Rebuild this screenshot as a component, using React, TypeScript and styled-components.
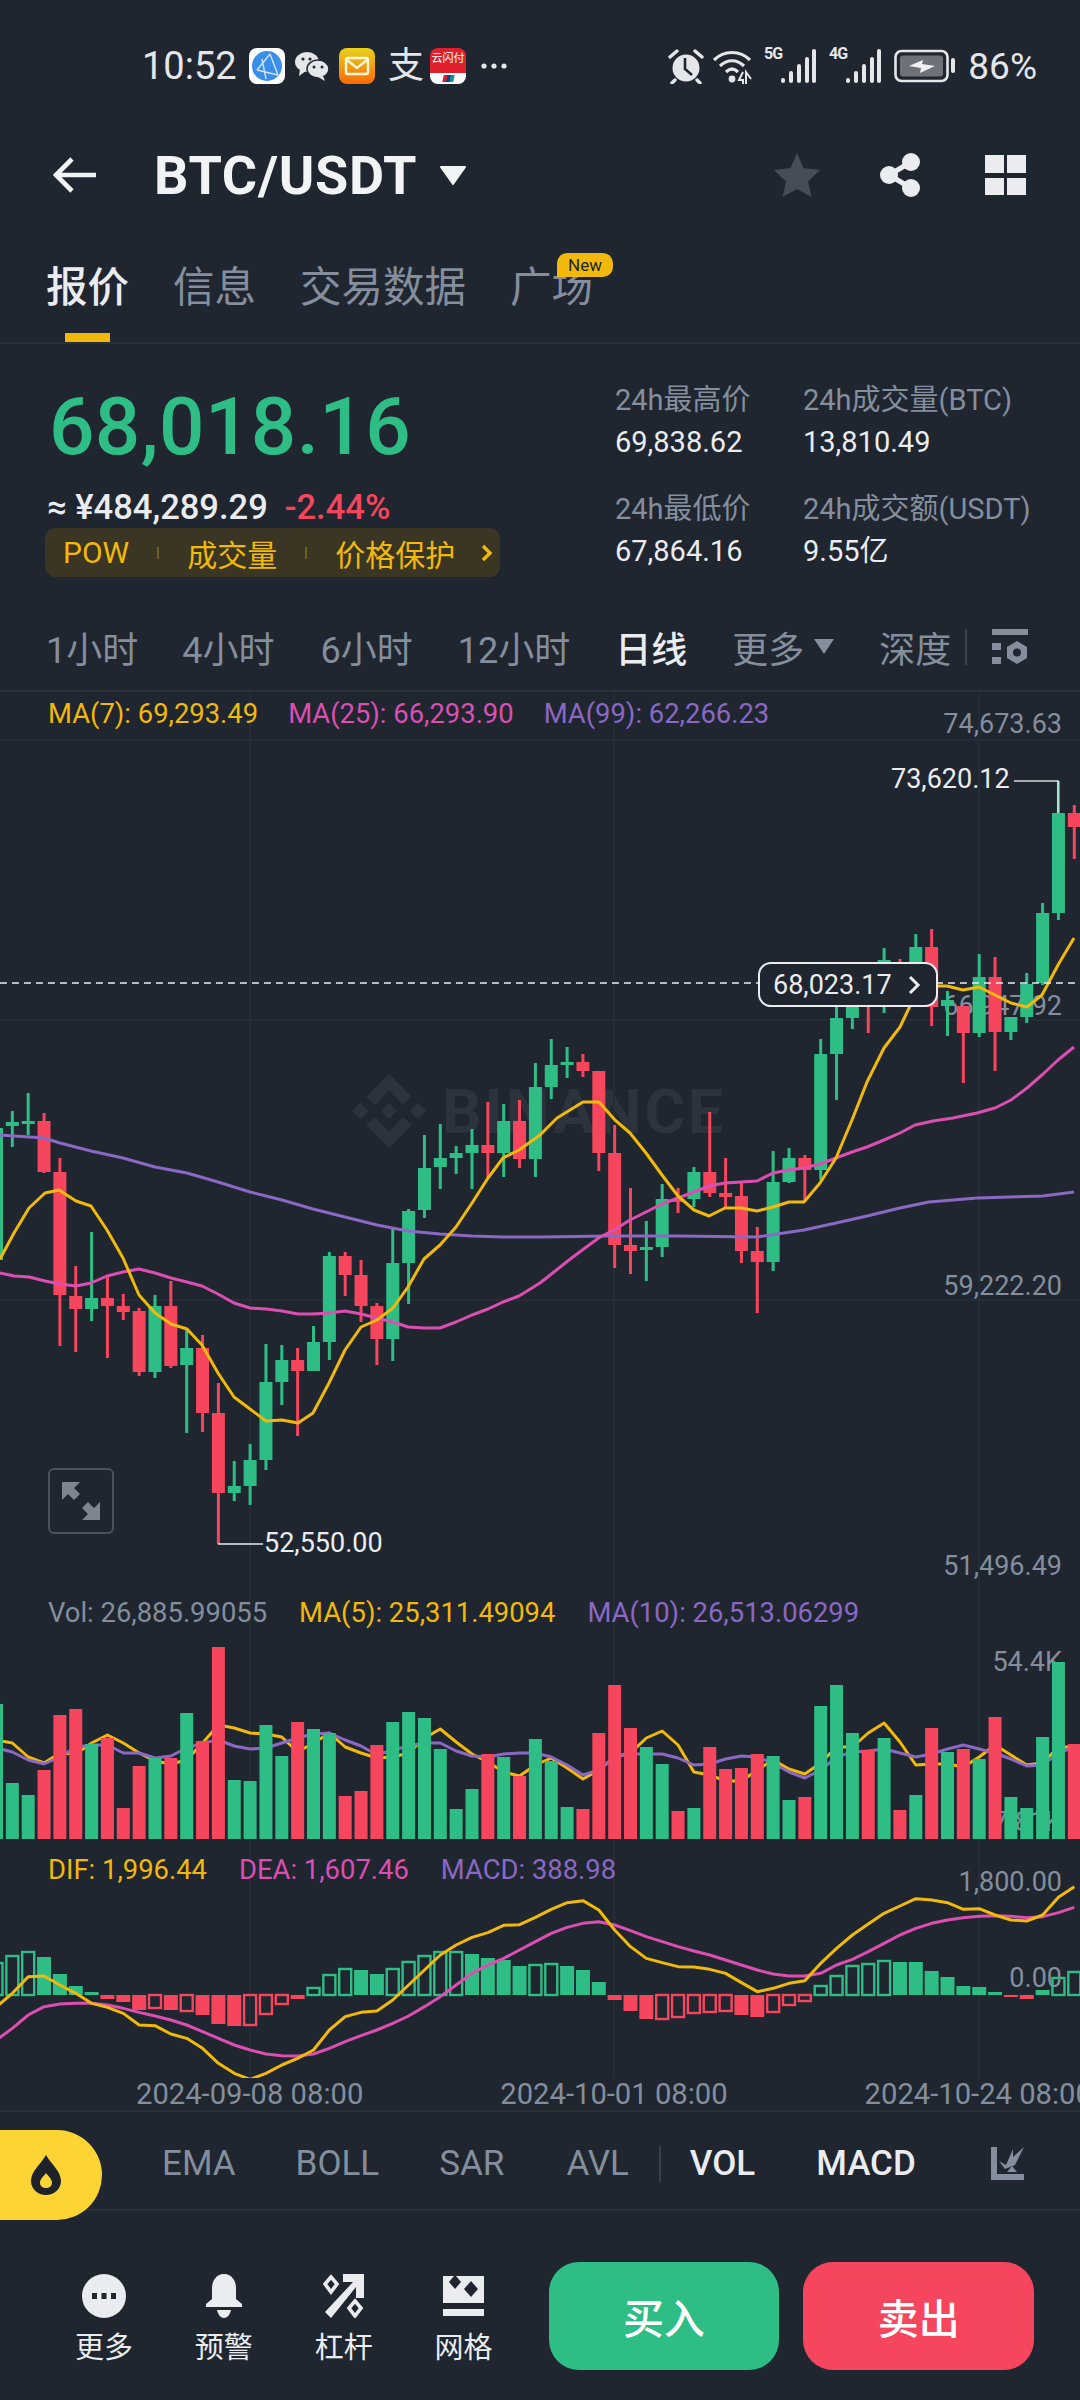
import * as React from "react";
import styled, { createGlobalStyle } from "styled-components";
import { SiBinance } from "react-icons/si";

const BG = "#1f2630";
const GREEN = "#2ebd85";
const RED = "#f6465d";
const GRAY = "#848e9c";
const WHITE = "#eaecef";
const YELLOW = "#f0b90b";
const PINK = "#dc4fb0";
const PURPLE = "#8a68c4";
const GRID = "#252c36";

const GlobalStyle = createGlobalStyle`
  html, body {
    margin: 0;
    padding: 0;
    background: ${BG};
  }
  * { box-sizing: border-box; }
`;

const Page = styled.div`
  width: 1080px;
  height: 2400px;
  overflow: hidden;
  background: ${BG};
  color: ${WHITE};
  font-family: Roboto, "Noto Sans CJK SC", sans-serif;
`;

/* status bar */
const StatusBar = styled.div`
  height: 132px;
  display: flex;
  align-items: center;
  padding: 0 43px 0 142px;
  color: #e4e6ea;
`;
const Clock = styled.span`
  font-size: 38px;
  width: 107px;
`;
const NoticeIcons = styled.div`
  display: flex;
  align-items: center;
  gap: 10px;
`;
const Square = styled.div`
  width: 36px;
  height: 36px;
  border-radius: 8px;
  overflow: hidden;
  flex: none;
`;
const AlipayGlyph = styled.span`
  font-size: 36px;
  width: 36px;
  line-height: 36px;
  margin: 0 -4px 0 3px;
  color: #e4e6ea;
`;
const UnionTop = styled.div`
  height: 25px;
  background: #e0202c;
  color: #fff;
  font-size: 11px;
  line-height: 14px;
  text-align: center;
  padding-top: 4px;
`;
const UnionBottom = styled.div`
  height: 11px;
  background: #fff;
  display: flex;
  justify-content: center;
  align-items: center;
`;
const UnionMark = styled.div`
  width: 11px;
  height: 7px;
  background: linear-gradient(90deg, #d8212c 33%, #14418b 33%, #14418b 66%, #1a8f8f 66%);
  transform: skewX(-12deg);
`;
const MoreDots = styled.svg`
  margin-left: 5px;
`;
const StatusRight = styled.div`
  margin-left: auto;
  display: flex;
  align-items: center;
  gap: 9px;
`;
const NetworkTag = styled.div`
  position: relative;
  width: 52px;
  height: 36px;
  margin-right: 4px;
`;
const NetworkText = styled.span`
  position: absolute;
  left: 0;
  top: -4px;
  font-size: 16px;
  font-weight: 700;
  letter-spacing: -1px;
`;
const BatteryText = styled.span`
  font-size: 37px;
  width: 72px;
  text-align: right;
`;

/* nav */
const NavBar = styled.div`
  height: 86px;
  display: flex;
  align-items: center;
  padding: 0 54px 0 53px;
`;
const Title = styled.span`
  font-size: 54px;
  font-weight: 700;
  letter-spacing: 0.7px;
  margin-left: 57px;
  color: #f2f3f5;
`;
const TitleCaret = styled.svg`
  margin-left: 22px;
`;
const NavActions = styled.div`
  margin-left: auto;
  display: flex;
  align-items: center;
  gap: 60px;
`;

/* tabs */
const TabsRow = styled.div`
  height: 126px;
  display: flex;
  gap: 44px;
  padding-left: 46px;
  border-bottom: 2px solid #2b3139;
`;
const Tab = styled.div<{ $active?: boolean }>`
  position: relative;
  padding-top: 45px;
  font-size: 41.5px;
  line-height: 50px;
  font-weight: ${(p) => (p.$active ? 500 : 400)};
  color: ${(p) => (p.$active ? WHITE : GRAY)};
  &::after {
    content: "";
    display: ${(p) => (p.$active ? "block" : "none")};
    position: absolute;
    left: 19px;
    bottom: 0;
    width: 45px;
    height: 9px;
    background: ${YELLOW};
  }
`;
const NewBadge = styled.span`
  position: absolute;
  left: 47px;
  top: 35px;
  width: 56px;
  height: 24px;
  border-radius: 10px 10px 10px 0;
  background: ${YELLOW};
  color: #1e2329;
  font-size: 17px;
  line-height: 24px;
  text-align: center;
`;

/* ticker */
const Ticker = styled.div`
  height: 263px;
  display: flex;
  padding-top: 38px;
`;
const TickerLeft = styled.div`
  width: 615px;
  padding: 5px 0 0 47px;
`;
const Price = styled.div`
  font-size: 80px;
  line-height: 80px;
  font-weight: 500;
  letter-spacing: 0.4px;
  color: ${GREEN};
  margin-left: 2px;
`;
const FiatRow = styled.div`
  display: flex;
  gap: 17px;
  margin-top: 20px;
  font-size: 34.5px;
  line-height: 40px;
  font-weight: 500;
`;
const Change = styled.span`
  color: ${RED};
`;
const TagStrip = styled.div`
  width: 455px;
  height: 49px;
  margin-top: 1px;
  margin-left: -2px;
  padding-left: 18px;
  display: flex;
  align-items: center;
  border-radius: 10px;
  background: #3b3623;
  color: ${YELLOW};
  font-size: 30px;
  white-space: nowrap;
`;
const TagSep = styled.i`
  flex: none;
  width: 2px;
  height: 12px;
  background: #6d5f22;
  margin: 0 28px;
`;
const TagChevron = styled.svg`
  flex: none;
  margin-left: 26px;
`;
const StatsGrid = styled.div`
  display: grid;
  grid-template-columns: 188px auto;
  grid-auto-rows: 36px;
  row-gap: 6px;
  align-content: start;
`;
const StatLabel = styled.div<{ $spaced?: boolean }>`
  font-size: 29px;
  line-height: 36px;
  color: ${GRAY};
  margin-top: ${(p) => (p.$spaced ? "25px" : "0")};
  white-space: nowrap;
`;
const StatValue = styled.div<{ $spaced?: boolean }>`
  font-size: 29px;
  line-height: 36px;
  margin-top: ${(p) => (p.$spaced ? "25px" : "0")};
  color: ${WHITE};
`;

/* timeframes */
const TimeRow = styled.div`
  height: 85px;
  display: flex;
  align-items: center;
  padding: 0 0 4px 46px;
  border-bottom: 2px solid #2b3139;
`;
const TimeItem = styled.span<{ $gap: number; $active?: boolean }>`
  font-size: 36px;
  margin-right: ${(p) => p.$gap}px;
  color: ${(p) => (p.$active ? WHITE : GRAY)};
  font-weight: ${(p) => (p.$active ? 500 : 400)};
  white-space: nowrap;
`;
const TimeCaret = styled.svg`
  margin-right: 45px;
`;
const TimeSep = styled.i`
  width: 2px;
  height: 36px;
  background: #39404b;
  margin: 0 25px 0 14px;
`;

/* charts */
const Panel = styled.div<{ $h: number }>`
  position: relative;
  width: 1080px;
  height: ${(p) => p.$h}px;
  overflow: hidden;
`;
const ChartSvg = styled.svg`
  position: absolute;
  left: 0;
  top: 0;
  display: block;
`;
const Legend = styled.div<{ $pad: number; $gap: number }>`
  position: relative;
  display: flex;
  gap: ${(p) => p.$gap}px;
  padding: ${(p) => p.$pad}px 0 0 48px;
  font-size: 27.4px;
  line-height: 36px;
  white-space: nowrap;
`;
const LegendItem = styled.span<{ $c: string }>`
  color: ${(p) => p.$c};
`;
const AxisLabel = styled.span<{ $top: number }>`
  position: absolute;
  right: 18px;
  top: ${(p) => p.$top}px;
  font-size: 27px;
  line-height: 34px;
  color: ${GRAY};
`;
const Watermark = styled.div`
  position: absolute;
  left: 352px;
  top: 382px;
  display: flex;
  align-items: center;
  gap: 16px;
  color: #2c333d;
  font-size: 62px;
  font-weight: 700;
  letter-spacing: 3px;
`;
const PriceNote = styled.span<{ $left: number; $top: number }>`
  position: absolute;
  left: ${(p) => p.$left}px;
  top: ${(p) => p.$top}px;
  font-size: 27px;
  line-height: 34px;
  color: ${WHITE};
`;
const LastPriceTag = styled.div`
  position: absolute;
  left: 758px;
  top: 270px;
  width: 180px;
  height: 45px;
  border: 2px solid ${WHITE};
  border-radius: 13px;
  background: ${BG};
  display: flex;
  align-items: center;
  justify-content: space-between;
  padding: 0 15px 0 13px;
  font-size: 27px;
`;
const ExpandButton = styled.div`
  position: absolute;
  left: 48px;
  top: 776px;
  width: 66px;
  height: 66px;
  border: 2px solid #4a525e;
  border-radius: 6px;
  display: flex;
  align-items: center;
  justify-content: center;
`;
const DateRow = styled.div`
  height: 32px;
  display: flex;
  gap: 137px;
  padding-left: 136px;
  font-size: 29.2px;
  line-height: 32px;
  color: ${GRAY};
  white-space: nowrap;
`;

/* indicators */
const IndicatorBar = styled.div`
  position: relative;
  height: 101px;
  display: flex;
  align-items: center;
  padding: 6px 56px 0 162px;
  font-size: 35px;
  color: ${GRAY};
  border-top: 2px solid #2b3139;
  border-bottom: 2px solid #2b3139;
`;
const HotPill = styled.div`
  position: absolute;
  left: 0;
  top: 18px;
  width: 102px;
  height: 90px;
  background: #fcd535;
  border-radius: 0 45px 45px 0;
  display: flex;
  align-items: center;
  justify-content: center;
  padding-right: 10px;
`;
const IndicatorItem = styled.span<{ $gap: number; $active?: boolean }>`
  margin-right: ${(p) => p.$gap}px;
  color: ${(p) => (p.$active ? WHITE : GRAY)};
  font-weight: ${(p) => (p.$active ? 500 : 400)};
`;
const IndicatorSep = styled.i`
  width: 2px;
  height: 36px;
  background: #39404b;
  margin-right: 29px;
`;
const ChartIcon = styled.svg`
  margin-left: auto;
`;

/* bottom actions */
const BottomBar = styled.div`
  display: flex;
  padding: 51px 46px 0 44px;
`;
const ActionItem = styled.div`
  width: 120px;
  padding-top: 12px;
  display: flex;
  flex-direction: column;
  align-items: center;
  font-size: 29px;
  line-height: 40px;
  color: ${WHITE};
`;
const ActionIcon = styled.div`
  height: 44px;
  margin-bottom: 10px;
`;
const TradeButton = styled.button<{ $sell?: boolean }>`
  width: 231px;
  height: 108px;
  margin-left: ${(p) => (p.$sell ? "24px" : "25px")};
  border: none;
  border-radius: 30px;
  background: ${(p) => (p.$sell ? RED : GREEN)};
  color: #fff;
  font-family: inherit;
  font-size: 41px;
  font-weight: 500;
`;

const kx = (k: number) => -3.5 + 15.85 * k;
const toPts = (ys: number[]) => ys.map((y, k) => `${kx(k)},${y}`).join(" ");
const xyPts = (pts: number[][]) => pts.map((p) => p.join(",")).join(" ");

// wick top, body top, body bottom, wick bottom, 1 = green
const candles: number[][] = [
  [1120, 1128, 1260, 1262, 1], [1111, 1122, 1126, 1147, 1], [1093, 1121, 1123, 1135, 1], [1113, 1121, 1172, 1173, 0],
  [1158, 1172, 1295, 1346, 0], [1266, 1296, 1309, 1352, 0], [1232, 1298, 1309, 1321, 1], [1277, 1298, 1306, 1358, 0],
  [1294, 1306, 1312, 1320, 0], [1308, 1311, 1372, 1376, 0], [1295, 1306, 1372, 1378, 1], [1281, 1306, 1366, 1368, 0],
  [1330, 1348, 1365, 1433, 1], [1335, 1348, 1413, 1432, 0], [1383, 1413, 1493, 1544, 0], [1461, 1486, 1493, 1501, 1],
  [1444, 1460, 1486, 1505, 1], [1344, 1382, 1460, 1470, 1], [1345, 1360, 1382, 1405, 1], [1348, 1360, 1371, 1436, 0],
  [1326, 1342, 1371, 1371, 1], [1252, 1256, 1342, 1360, 1], [1252, 1256, 1275, 1296, 0], [1260, 1275, 1306, 1322, 0],
  [1303, 1306, 1339, 1365, 0], [1228, 1263, 1339, 1361, 1], [1209, 1211, 1263, 1304, 1], [1135, 1168, 1210, 1218, 1],
  [1124, 1158, 1167, 1189, 1], [1146, 1153, 1158, 1174, 1], [1129, 1145, 1153, 1189, 1], [1102, 1145, 1153, 1177, 0],
  [1104, 1121, 1153, 1177, 1], [1100, 1121, 1159, 1168, 0], [1063, 1087, 1159, 1177, 1], [1039, 1065, 1087, 1099, 1],
  [1047, 1062, 1064, 1078, 1], [1054, 1062, 1071, 1077, 0], [1071, 1071, 1153, 1171, 0], [1125, 1153, 1245, 1268, 0],
  [1188, 1245, 1251, 1274, 0], [1221, 1247, 1250, 1281, 1], [1184, 1199, 1247, 1257, 1], [1188, 1199, 1202, 1213, 0],
  [1167, 1172, 1199, 1207, 1], [1112, 1172, 1193, 1197, 0], [1158, 1193, 1197, 1208, 0], [1183, 1196, 1251, 1263, 0],
  [1227, 1251, 1262, 1313, 0], [1151, 1182, 1262, 1271, 1], [1148, 1158, 1182, 1183, 1], [1155, 1158, 1170, 1201, 0],
  [1039, 1054, 1170, 1180, 1], [1006, 1018, 1054, 1100, 1], [990, 1000, 1018, 1029, 1], [993, 995, 1005, 1033, 0],
  [948, 960, 995, 1013, 1], [959, 965, 990, 1000, 0], [934, 947, 990, 1000, 1], [929, 947, 1007, 1026, 0],
  [991, 1000, 1006, 1036, 1], [1006, 1006, 1033, 1083, 0], [954, 977, 1033, 1037, 1], [957, 977, 1032, 1071, 0],
  [1017, 1017, 1032, 1040, 1], [973, 984, 1017, 1023, 1], [903, 913, 983, 985, 1], [781, 813, 913, 920, 1],
  [805, 813, 827, 859, 0],
];

const ma7 = [[0,1259],[14,1233],[29,1208],[45,1193],[59,1190],[76,1201],[91,1206],[107,1230],[123,1258],[139,1295],[155,1313],[171,1324],[187,1329],[202,1345],[218,1373],[234,1397],[250,1409],[266,1421],[282,1420],[298,1423],[313,1413],[329,1383],[345,1350],[361,1327],[377,1320],[393,1308],[408,1287],[424,1259],[440,1245],[456,1227],[472,1203],[488,1178],[503,1158],[519,1150],[540,1135],[557,1118],[583,1102],[599,1102],[615,1120],[630,1133],[646,1153],[662,1175],[678,1196],[694,1210],[709,1216],[725,1208],[741,1208],[757,1211],[773,1207],[789,1202],[804,1202],[820,1183],[836,1158],[852,1120],[867,1082],[884,1048],[900,1027],[910,1006],[938,986],[947,986],[963,990],[979,987],[995,995],[1011,1003],[1027,1007],[1042,995],[1058,965],[1074,938]];
const ma25 = [[0,1273],[14,1276],[29,1277],[45,1281],[60,1284],[76,1286],[91,1283],[107,1276],[123,1272],[139,1269],[155,1273],[171,1278],[187,1282],[202,1286],[218,1294],[234,1303],[250,1308],[266,1309],[282,1311],[298,1314],[313,1314],[329,1313],[345,1311],[361,1314],[377,1318],[393,1322],[408,1327],[424,1328],[440,1328],[456,1322],[472,1315],[488,1309],[503,1302],[519,1296],[540,1283],[554,1272],[569,1260],[585,1248],[600,1237],[614,1230],[630,1220],[646,1212],[662,1204],[678,1198],[694,1192],[709,1186],[725,1183],[741,1182],[757,1181],[773,1173],[789,1170],[804,1168],[820,1164],[836,1158],[852,1152],[867,1147],[884,1140],[900,1133],[915,1125],[933,1121],[953,1118],[977,1113],[995,1108],[1011,1100],[1027,1088],[1042,1075],[1058,1060],[1074,1047]];
const ma99 = [[0,1135],[44,1138],[60,1143],[91,1151],[123,1158],[155,1167],[187,1173],[218,1182],[250,1192],[282,1200],[313,1209],[345,1217],[377,1225],[408,1231],[440,1234],[472,1236],[503,1237],[540,1237],[609,1236],[678,1236],[757,1237],[804,1230],[836,1223],[867,1216],[900,1208],[929,1202],[977,1198],[1043,1196],[1074,1192]];

// bar top, 1 = green
const volumes: number[][] = [
  [1704,1],[1783,1],[1795,1],[1770,0],[1715,0],[1709,0],[1744,1],[1738,0],[1808,0],[1766,0],[1758,1],[1758,0],[1713,1],[1741,0],[1647,0],[1780,1],[1781,1],[1725,1],[1756,1],[1722,0],[1729,1],[1733,1],[1796,0],[1791,0],[1745,0],[1722,1],[1712,1],[1718,1],[1749,1],[1809,1],[1789,1],[1754,0],[1757,1],[1776,0],[1739,1],
  [1761,1],[1807,1],[1809,0],[1733,0],[1685,0],[1728,0],[1747,1],[1764,1],[1811,0],[1808,1],[1747,0],[1769,0],[1768,0],[1754,0],[1756,1],[1800,1],[1797,0],[1706,1],[1685,1],[1733,1],[1750,0],[1738,1],[1810,0],[1795,1],[1728,0],[1752,1],[1749,0],[1759,1],[1717,0],[1797,1],[1808,1],[1737,1],[1662,1],[1744,0],
];
const volMa5 = [1740,1743,1757,1763,1753,1754,1743,1735,1743,1753,1761,1764,1760,1743,1725,1728,1733,1734,1737,1752,1743,1733,1747,1753,1758,1757,1753,1738,1729,1742,1754,1762,1772,1776,1765,1758,1768,1779,1770,1757,1753,1738,1731,1745,1772,1775,1781,1781,1770,1760,1769,1774,1763,1747,1747,1733,1723,1742,1765,1764,1764,1767,1757,1745,1755,1765,1763,1747,1747];
const volMa10 = [1748,1752,1760,1764,1757,1747,1745,1745,1753,1753,1758,1756,1748,1743,1740,1746,1749,1748,1743,1738,1734,1733,1740,1746,1755,1750,1746,1743,1743,1751,1756,1757,1754,1753,1753,1757,1765,1775,1770,1757,1754,1754,1754,1758,1765,1764,1759,1756,1757,1763,1772,1778,1770,1757,1752,1751,1749,1753,1757,1754,1749,1745,1749,1753,1759,1766,1765,1753,1747];

// histogram value, 1 = hollow
const macdHist: number[][] = [
  [32,1],[39,1],[43,1],[38,0],[21,0],[9,0],[3,0],[-4,0],[-7,0],[-15,0],[-13,1],[-15,0],[-16,1],[-20,0],[-29,0],[-31,0],[-30,1],[-19,1],[-9,1],[-4,0],[7,1],[20,1],[26,1],[25,0],[21,0],[26,1],[33,1],[39,1],[43,1],[43,1],[41,0],[37,0],[35,0],[29,0],[30,1],[31,1],[29,0],[25,0],[13,0],[-5,0],[-16,0],[-24,0],[-24,1],[-22,1],[-18,1],[-17,1],[-16,1],[-20,0],[-22,0],[-17,1],[-10,1],[-6,1],[9,1],[19,1],[29,1],[31,1],[34,1],[33,0],[33,0],[24,0],[18,0],[9,0],[8,0],[3,0],[-2,0],[-4,0],[5,0],[17,1],[23,1],
];
const dif = [470,430,380,378,405,430,460,472,490,525,527,552,565,595,640,670,688,670,645,625,600,540,500,487,483,450,405,360,315,285,262,248,226,224,202,178,158,152,180,240,290,325,338,350,351,358,370,398,425,415,400,392,340,295,255,222,190,168,146,150,158,178,176,195,210,213,195,142,110].map((p) => 1850 + p / 3);
const dea = [570,535,495,470,462,460,460,465,475,487,498,510,525,545,565,585,600,612,617,618,612,595,575,557,540,520,498,470,440,405,370,345,325,300,275,250,232,220,215,225,242,260,275,290,303,315,330,345,360,372,378,378,370,345,328,305,280,255,235,220,210,203,199,197,199,203,200,188,172].map((p) => 1850 + p / 3);

const GridLines = ({ top, bottom }: { top: number; bottom: number }) => (
  <>
    {[250, 614, 979].map((x) => (
      <line key={x} x1={x} x2={x} y1={top} y2={bottom} stroke={GRID} strokeWidth="2" />
    ))}
  </>
);

const Trend = ({ points, color, w = 3 }: { points: string; color: string; w?: number }) => (
  <polyline points={points} fill="none" stroke={color} strokeWidth={w} strokeLinejoin="round" />
);

const MainChart = () => (
  <ChartSvg width="1080" height="891" viewBox="0 692 1080 891">
    <GridLines top={692} bottom={1583} />
    {[740, 1020, 1300].map((y) => (
      <line key={y} x1="0" x2="1080" y1={y} y2={y} stroke={GRID} strokeWidth="2" />
    ))}
    {candles.map(([wt, bt, bb, wb, up], k) => {
      const c = up ? GREEN : RED;
      return (
        <g key={k} fill={c}>
          <rect x={kx(k) - 1.5} y={wt} width="3" height={wb - wt} />
          <rect x={kx(k) - 6.5} y={bt} width="13" height={Math.max(bb - bt, 3)} />
        </g>
      );
    })}
    <Trend points={xyPts(ma99)} color={PURPLE} />
    <Trend points={xyPts(ma25)} color={PINK} />
    <Trend points={xyPts(ma7)} color={YELLOW} />
    <line x1="0" x2="1078" y1="983" y2="983" stroke={WHITE} strokeWidth="1.5" strokeDasharray="7 5" />
    <polyline points="1014,781 1058,781 1058,813" fill="none" stroke={WHITE} strokeWidth="1.5" opacity="0.9" />
    <line x1="218" x2="263" y1="1544" y2="1544" stroke={WHITE} strokeWidth="1.5" />
  </ChartSvg>
);

const VolumeChart = () => (
  <ChartSvg width="1080" height="267" viewBox="0 1583 1080 267">
    <GridLines top={1583} bottom={1850} />
    <Trend points={toPts(volMa5)} color={YELLOW} />
    <Trend points={toPts(volMa10)} color={PURPLE} />
    {volumes.map(([top, up], k) => (
      <rect key={k} x={kx(k) - 6.5} y={top} width="13" height={1839 - top} fill={up ? GREEN : RED} />
    ))}
  </ChartSvg>
);

const MacdChart = () => (
  <ChartSvg width="1080" height="228" viewBox="0 1850 1080 228">
    <GridLines top={1850} bottom={2078} />
    {macdHist.map(([v, hollow], k) => {
      const c = v >= 0 ? GREEN : RED;
      const y = v >= 0 ? 1995 - v : 1995;
      const h = Math.abs(v);
      return hollow ? (
        <rect key={k} x={kx(k) - 6} y={y} width="12" height={h} fill="none" stroke={c} strokeWidth="2.4" />
      ) : (
        <rect key={k} x={kx(k) - 7} y={y} width="14" height={h} fill={c} />
      );
    })}
    <Trend points={toPts(dea)} color={PINK} />
    <Trend points={toPts(dif)} color={YELLOW} />
  </ChartSvg>
);

const App = () => (
  <Page>
    <GlobalStyle />
    <StatusBar>
      <Clock>10:52</Clock>
      <NoticeIcons>
        <Square>
          <svg width="36" height="36" viewBox="0 0 36 36">
            <rect width="36" height="36" fill="#fff" />
            <circle cx="18" cy="18" r="15" fill="#3b8fe8" />
            <path d="M8 22 L21 6 M8 22 L29 27 M21 6 L29 27 M13 11 L17 31" stroke="#cfe4fb" strokeWidth="1.4" fill="none" />
          </svg>
        </Square>
        <svg width="34" height="36" viewBox="0 0 34 36">
          <ellipse cx="12" cy="14" rx="12" ry="10" fill="#e4e6ea" />
          <path d="M5 21 L4 28 L11 23 Z" fill="#e4e6ea" />
          <ellipse cx="23" cy="21" rx="11" ry="9" fill="#e4e6ea" stroke="#1f2630" strokeWidth="1.5" />
          <path d="M28 28 L30 33 L23 29 Z" fill="#e4e6ea" />
          <circle cx="8" cy="11" r="1.6" fill="#1f2630" />
          <circle cx="15" cy="11" r="1.6" fill="#1f2630" />
          <circle cx="19" cy="19" r="1.5" fill="#1f2630" />
          <circle cx="27" cy="19" r="1.5" fill="#1f2630" />
        </svg>
        <Square>
          <svg width="36" height="36" viewBox="0 0 36 36">
            <defs>
              <linearGradient id="mailGrad" x1="0" y1="0" x2="0" y2="1">
                <stop offset="0" stopColor="#e8d21c" />
                <stop offset="1" stopColor="#f86a08" />
              </linearGradient>
            </defs>
            <rect width="36" height="36" fill="url(#mailGrad)" />
            <rect x="7" y="10" width="22" height="16" rx="2" fill="none" stroke="#fff8d8" strokeWidth="2.4" />
            <path d="M8 12 L18 20 L28 12" fill="none" stroke="#fff8d8" strokeWidth="2.4" />
          </svg>
        </Square>
        <AlipayGlyph>支</AlipayGlyph>
        <Square>
          <UnionTop>云闪付</UnionTop>
          <UnionBottom>
            <UnionMark />
          </UnionBottom>
        </Square>
        <MoreDots width="26" height="36" viewBox="0 0 26 36">
          <circle cx="3" cy="18" r="2.6" fill="#e4e6ea" />
          <circle cx="13" cy="18" r="2.6" fill="#e4e6ea" />
          <circle cx="23" cy="18" r="2.6" fill="#e4e6ea" />
        </MoreDots>
      </NoticeIcons>
      <StatusRight>
        <svg width="36" height="36" viewBox="0 0 36 36">
          <circle cx="18" cy="20" r="13.5" fill="#e4e6ea" />
          <path d="M17 10 V21 L24 27" stroke="#1f2630" strokeWidth="2.6" fill="none" />
          <path d="M2 9 L9 3 M34 9 L27 3 M7 32 L4 35 M29 32 L32 35" stroke="#e4e6ea" strokeWidth="3.4" strokeLinecap="round" />
        </svg>
        <svg width="42" height="36" viewBox="0 0 42 36">
          <path d="M1 12 C11 2 27 2 37 12" stroke="#e4e6ea" strokeWidth="3.2" fill="none" />
          <path d="M7 18 C14 11 24 11 31 18" stroke="#e4e6ea" strokeWidth="3.2" fill="none" />
          <path d="M13 24 C17 20 21 20 25 24" stroke="#e4e6ea" strokeWidth="3.2" fill="none" />
          <circle cx="19" cy="31" r="3.4" fill="#e4e6ea" />
          <path d="M30 24 L26 32 H30 V36 M33 36 V24 L38 31" stroke="#e4e6ea" strokeWidth="2" fill="none" />
        </svg>
        <NetworkTag>
          <NetworkText>5G</NetworkText>
          <svg width="52" height="36" viewBox="0 0 52 36">
            <rect x="17" y="30" width="4" height="5" rx="2" fill="#e4e6ea" />
            <rect x="25" y="23" width="4" height="12" rx="2" fill="#e4e6ea" />
            <rect x="33" y="16" width="4" height="19" rx="2" fill="#e4e6ea" />
            <rect x="41" y="9" width="4" height="26" rx="2" fill="#e4e6ea" />
            <rect x="48" y="1" width="4" height="34" rx="2" fill="#e4e6ea" />
          </svg>
        </NetworkTag>
        <NetworkTag>
          <NetworkText>4G</NetworkText>
          <svg width="52" height="36" viewBox="0 0 52 36">
            <rect x="17" y="30" width="4" height="5" rx="2" fill="#e4e6ea" />
            <rect x="25" y="23" width="4" height="12" rx="2" fill="#e4e6ea" />
            <rect x="33" y="16" width="4" height="19" rx="2" fill="#e4e6ea" />
            <rect x="41" y="9" width="4" height="26" rx="2" fill="#e4e6ea" />
            <rect x="48" y="1" width="4" height="34" rx="2" fill="#e4e6ea" />
          </svg>
        </NetworkTag>
        <svg width="62" height="36" viewBox="0 0 62 36">
          <rect x="1.5" y="3" width="52" height="30" rx="6" fill="none" stroke="#e4e6ea" strokeWidth="2.6" />
          <rect x="6" y="7.5" width="43" height="21" rx="3" fill="#6e7278" />
          <path d="M15 18 L29 12 L28 16 L41 18 L26 25 L27 20 Z" fill="#f0f1f3" />
          <rect x="57" y="10" width="4" height="15" rx="2" fill="#e4e6ea" />
        </svg>
        <BatteryText>86%</BatteryText>
      </StatusRight>
    </StatusBar>

    <NavBar>
      <svg width="44" height="36" viewBox="0 0 44 36">
        <path d="M43 18 H4 M19 2 L3 18 L19 34" fill="none" stroke="#f2f3f5" strokeWidth="4.6" />
      </svg>
      <Title>BTC/USDT</Title>
      <TitleCaret width="28" height="20" viewBox="0 0 28 20">
        <path d="M2 2 H26 L14 19 Z" fill="#f2f3f5" stroke="#f2f3f5" strokeWidth="2" strokeLinejoin="round" />
      </TitleCaret>
      <NavActions>
        <svg width="46" height="44" viewBox="0 0 46 44">
          <path d="M23 0 L29.5 15 L46 17 L34 28.5 L37.5 44 L23 36 L8.5 44 L12 28.5 L0 17 L16.5 15 Z" fill="#474d57" strokeLinejoin="round" />
        </svg>
        <svg width="45" height="44" viewBox="0 0 45 44">
          <path d="M31 9 L9 22 L31 35" fill="none" stroke={WHITE} strokeWidth="5" />
          <circle cx="31" cy="9" r="9" fill={WHITE} />
          <circle cx="9" cy="22" r="9" fill={WHITE} />
          <circle cx="31" cy="35" r="9" fill={WHITE} />
        </svg>
        <svg width="41" height="40" viewBox="0 0 41 40">
          <rect width="19" height="18" fill={WHITE} />
          <rect x="22" width="19" height="18" fill={WHITE} />
          <rect y="23" width="19" height="17" fill={WHITE} />
          <rect x="22" y="23" width="19" height="17" fill={WHITE} />
        </svg>
      </NavActions>
    </NavBar>

    <TabsRow>
      <Tab $active>报价</Tab>
      <Tab>信息</Tab>
      <Tab>交易数据</Tab>
      <Tab>
        广场
        <NewBadge>New</NewBadge>
      </Tab>
    </TabsRow>

    <Ticker>
      <TickerLeft>
        <Price>68,018.16</Price>
        <FiatRow>
          <span>≈ ¥484,289.29</span>
          <Change>-2.44%</Change>
        </FiatRow>
        <TagStrip>
          <span>POW</span>
          <TagSep />
          <span>成交量</span>
          <TagSep />
          <span>价格保护</span>
          <TagChevron width="12" height="18" viewBox="0 0 12 18">
            <path d="M2 2 L9 9 L2 16" fill="none" stroke={YELLOW} strokeWidth="3.4" />
          </TagChevron>
        </TagStrip>
      </TickerLeft>
      <StatsGrid>
        <StatLabel>24h最高价</StatLabel>
        <StatLabel>24h成交量(BTC)</StatLabel>
        <StatValue>69,838.62</StatValue>
        <StatValue>13,810.49</StatValue>
        <StatLabel $spaced>24h最低价</StatLabel>
        <StatLabel $spaced>24h成交额(USDT)</StatLabel>
        <StatValue $spaced>67,864.16</StatValue>
        <StatValue $spaced>9.55亿</StatValue>
      </StatsGrid>
    </Ticker>

    <TimeRow>
      <TimeItem $gap={44}>1小时</TimeItem>
      <TimeItem $gap={46}>4小时</TimeItem>
      <TimeItem $gap={45}>6小时</TimeItem>
      <TimeItem $gap={45}>12小时</TimeItem>
      <TimeItem $gap={45} $active>日线</TimeItem>
      <TimeItem $gap={10}>更多</TimeItem>
      <TimeCaret width="20" height="15" viewBox="0 0 20 15">
        <path d="M0 0 H20 L10 15 Z" fill={GRAY} />
      </TimeCaret>
      <TimeItem $gap={0}>深度</TimeItem>
      <TimeSep />
      <svg width="36" height="36" viewBox="0 0 36 36">
        <rect width="36" height="6" fill={GRAY} />
        <rect y="14" width="9" height="7" fill={GRAY} />
        <rect y="28" width="9" height="7" fill={GRAY} />
        <path d="M25 12 L35 18 V29 L25 35 L15 29 V18 Z" fill={GRAY} />
        <circle cx="25" cy="23.5" r="4" fill={BG} />
      </svg>
    </TimeRow>

    <Panel $h={891}>
      <Watermark>
        <SiBinance size={74} />
        BINANCE
      </Watermark>
      <AxisLabel $top={15}>74,673.63</AxisLabel>
      <AxisLabel $top={297}>66,947.92</AxisLabel>
      <AxisLabel $top={577}>59,222.20</AxisLabel>
      <AxisLabel $top={857}>51,496.49</AxisLabel>
      <MainChart />
      <Legend $pad={4} $gap={30}>
        <LegendItem $c={YELLOW}>MA(7): 69,293.49</LegendItem>
        <LegendItem $c={PINK}>MA(25): 66,293.90</LegendItem>
        <LegendItem $c={PURPLE}>MA(99): 62,266.23</LegendItem>
      </Legend>
      <PriceNote $left={891} $top={70}>73,620.12</PriceNote>
      <PriceNote $left={264} $top={834}>52,550.00</PriceNote>
      <LastPriceTag>
        68,023.17
        <svg width="14" height="22" viewBox="0 0 14 22">
          <path d="M3 3 L11 11 L3 19" fill="none" stroke={WHITE} strokeWidth="3" />
        </svg>
      </LastPriceTag>
      <ExpandButton>
        <svg width="38" height="38" viewBox="0 0 38 38">
          <path d="M0 0 H18 L12 6 L18 12 L12 18 L6 12 L0 18 Z" fill="#7d8590" />
          <path d="M38 38 H20 L26 32 L20 26 L26 20 L32 26 L38 20 Z" fill="#7d8590" />
        </svg>
      </ExpandButton>
    </Panel>

    <Panel $h={267}>
      <AxisLabel $top={62}>54.4K</AxisLabel>
      <AxisLabel $top={222}>7.81K</AxisLabel>
      <VolumeChart />
      <Legend $pad={12} $gap={32}>
        <LegendItem $c={GRAY}>Vol: 26,885.99055</LegendItem>
        <LegendItem $c={YELLOW}>MA(5): 25,311.49094</LegendItem>
        <LegendItem $c={PURPLE}>MA(10): 26,513.06299</LegendItem>
      </Legend>
    </Panel>

    <Panel $h={228}>
      <AxisLabel $top={15}>1,800.00</AxisLabel>
      <AxisLabel $top={111}>0.00</AxisLabel>
      <MacdChart />
      <Legend $pad={2} $gap={32}>
        <LegendItem $c={YELLOW}>DIF: 1,996.44</LegendItem>
        <LegendItem $c={PINK}>DEA: 1,607.46</LegendItem>
        <LegendItem $c={PURPLE}>MACD: 388.98</LegendItem>
      </Legend>
    </Panel>

    <DateRow>
      <span>2024-09-08 08:00</span>
      <span>2024-10-01 08:00</span>
      <span>2024-10-24 08:00</span>
    </DateRow>

    <IndicatorBar>
      <HotPill>
        <svg width="34" height="44" viewBox="0 0 34 44">
          <path d="M17 2 C22 11 32 18 32 28 C32 36 25 42 17 42 C9 42 2 36 2 28 C2 18 12 11 17 2 Z" fill="#1e2329" />
          <path d="M17 20 C20 24 23 26 23 30 C23 33 20 35 17 35 C14 35 11 33 11 30 C11 26 14 24 17 20 Z" fill="#fcd535" />
        </svg>
      </HotPill>
      <IndicatorItem $gap={60}>EMA</IndicatorItem>
      <IndicatorItem $gap={60}>BOLL</IndicatorItem>
      <IndicatorItem $gap={62}>SAR</IndicatorItem>
      <IndicatorItem $gap={30}>AVL</IndicatorItem>
      <IndicatorSep />
      <IndicatorItem $gap={61} $active>VOL</IndicatorItem>
      <IndicatorItem $gap={0} $active>MACD</IndicatorItem>
      <ChartIcon width="33" height="33" viewBox="0 0 33 33">
        <path d="M0 0 H6 V27 H33 V33 H0 Z" fill={GRAY} />
        <path d="M8 14 L15 18 L22 2 L22 10 L33 0 L24 18 L14 22 Z" fill={GRAY} />
        <path d="M21 19 L26 25 H16 Z" fill={GRAY} />
      </ChartIcon>
    </IndicatorBar>

    <BottomBar>
      <ActionItem>
        <ActionIcon>
          <svg width="44" height="44" viewBox="0 0 44 44">
            <circle cx="22" cy="22" r="22" fill={WHITE} />
            <rect x="10" y="19" width="5" height="6" fill={BG} />
            <rect x="19.5" y="19" width="5" height="6" fill={BG} />
            <rect x="29" y="19" width="5" height="6" fill={BG} />
          </svg>
        </ActionIcon>
        更多
      </ActionItem>
      <ActionItem>
        <ActionIcon>
          <svg width="36" height="44" viewBox="0 0 36 44">
            <path d="M18 0 C26 0 30 7 30 14 V25 L36 30 V33 H0 V30 L6 25 V14 C6 7 10 0 18 0 Z" fill={WHITE} />
            <path d="M11 36 H25 C24 41 21 44 18 44 C15 44 12 41 11 36 Z" fill={WHITE} />
          </svg>
        </ActionIcon>
        预警
      </ActionItem>
      <ActionItem>
        <ActionIcon>
          <svg width="42" height="44" viewBox="0 0 42 44">
            <path d="M2 38 L8 44 L33 13 V24 H41 V0 H20 V8 L30 8 Z" fill={WHITE} />
            <path d="M8 3 L14 10 L8 18 L2 10 Z" fill="none" stroke={WHITE} strokeWidth="3.6" />
            <path d="M32 27 L38 34 L32 42 L26 34 Z" fill="none" stroke={WHITE} strokeWidth="3.6" />
          </svg>
        </ActionIcon>
        杠杆
      </ActionItem>
      <ActionItem>
        <ActionIcon>
          <svg width="41" height="44" viewBox="0 0 41 44">
            <path d="M0 2 H11 L6 8 L12 15 L18 8 L13 2 H41 V29 H0 Z" fill={WHITE} />
            <path d="M28 7 L35 15 L28 23 L21 15 Z" fill={BG} />
            <rect y="35" width="41" height="7" fill={WHITE} />
          </svg>
        </ActionIcon>
        网格
      </ActionItem>
      <TradeButton>买入</TradeButton>
      <TradeButton $sell>卖出</TradeButton>
    </BottomBar>
  </Page>
);

export default App;
